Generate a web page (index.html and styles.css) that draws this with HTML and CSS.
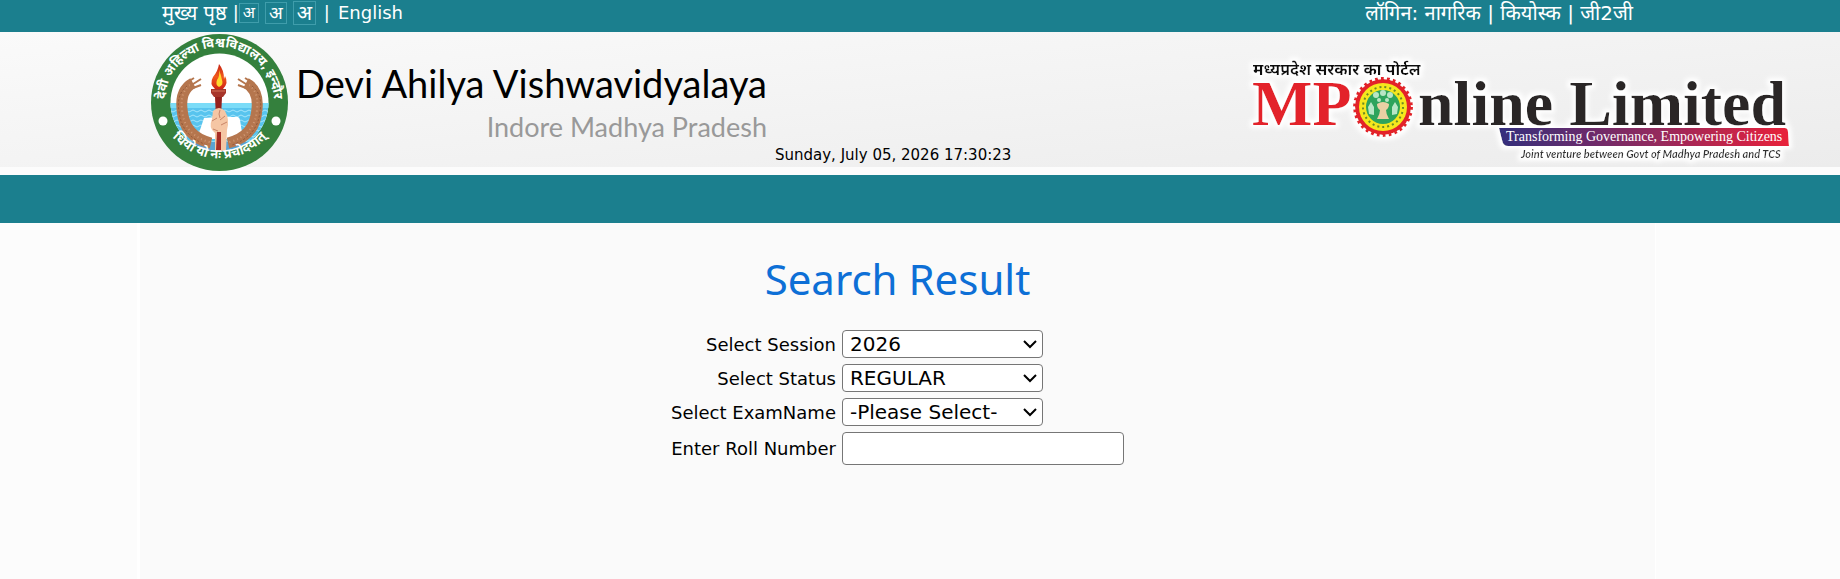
FILE: index.html
```html
<!DOCTYPE html>
<html lang="hi">
<head>
<meta charset="utf-8">
<title>Search Result</title>
<link rel="stylesheet" href="styles.css">
</head>
<body>
<div class="topbar">
  <nav class="topbar-left">
    <a href="#">मुख्य पृष्ठ</a>
    <span class="bar">|</span>
    <button type="button" class="size size-s">अ</button>
    <button type="button" class="size size-m">अ</button>
    <button type="button" class="size size-l">अ</button>
    <span class="sep">|</span>
    <a href="#" lang="en" class="lang">English</a>
  </nav>
  <nav class="topbar-right">लॉगिन: <a href="#">नागरिक</a> | <a href="#">कियोस्क</a> | <a href="#">जी2जी</a></nav>
</div>

<header class="header">
  <svg class="emblem" viewBox="0 0 137 137" role="img" aria-label="Devi Ahilya Vishwavidyalaya emblem">
    <defs>
      <path id="arc-top" d="M14.5 75 A54.5 54.5 0 1 1 122.5 75"/>
      <path id="arc-bottom" d="M17 97 A62 62 0 0 0 120 97"/>
      <clipPath id="disc"><circle cx="68.500" cy="68.500" r="49"/></clipPath>
      <pattern id="waves" width="8" height="5" patternUnits="userSpaceOnUse">
        <rect width="8" height="5" fill="#58c4ee"/>
        <path d="M0 2 Q2 0 4 2 T8 2" fill="none" stroke="#a5e5fb" stroke-width="1"/>
      </pattern>
      <linearGradient id="flame" x1="0" y1="0" x2="0" y2="1"><stop offset="0" stop-color="#c42114"/><stop offset=".5" stop-color="#f1591c"/><stop offset="1" stop-color="#cf2416"/></linearGradient>
    </defs>
    <circle cx="68.500" cy="68.500" r="68.500" fill="#34803d"/>
    <circle cx="68.500" cy="68.500" r="49" fill="#fff"/>
    <g clip-path="url(#disc)">
      <rect x="18" y="69" width="102" height="50" fill="url(#waves)"/>
      <rect x="18" y="69" width="102" height="5" fill="#7bdcf8"/>
      <path d="M53 84 L67 83 L84 83 Q88 82 89 86 L92 105 L46 105 Z" fill="#fff"/>
      <path d="M20 108 H118 V119 H20Z" fill="#5aa2d3"/>
      <g fill="none" stroke="#b5764e" stroke-width="11">
        <path d="M42 49 Q29 56 31 75 Q33 103 60 109"/>
        <path d="M95 49 Q108 56 106 75 Q104 103 77 109"/>
      </g>
      <g fill="none" stroke="#cf9874" stroke-width="2" stroke-dasharray="1 3">
        <path d="M39 51 Q29 58 31 75 Q33 102 59 108"/>
        <path d="M98 51 Q108 58 106 75 Q104 102 78 108"/>
      </g>
      <g fill="none" stroke="#8f5638" stroke-width="1" stroke-dasharray="2 2">
        <path d="M36 52 Q25 61 28 77 Q30 102 56 111"/>
        <path d="M101 52 Q112 61 109 77 Q107 102 81 111"/>
      </g>
      <g fill="none" stroke="#b5764e" stroke-width="2">
        <path d="M35 49 L43 44 M39 52 L50 45 M42 54 L50 51 M102 49 L94 44 M98 52 L87 45 M95 54 L87 51"/>
      </g>
    </g>
    <path d="M68 30 Q67 37 62 43 Q58 50 64 55 L72 55 Q78 49 74 42 L73 45 Q73 36 68 30Z" fill="url(#flame)"/>
    <path d="M68 36 Q69 42 66 46 Q64 51 68 53 Q73 51 71 46 Q70 41 68 36Z" fill="#ffd92e"/>
    <path d="M60 55 H75 V59 L72 63 H63 L60 59Z" fill="#a7352a"/>
    <path d="M61 57 H74" stroke="#d47558" stroke-width="1"/>
    <path d="M64 63 H71 L70 84 H65Z" fill="#94211d"/>
    <path d="M62 77 Q68 71 74 77 Q79 86 76 96 L75 117 H64 L64 99 Q57 94 61 85Z" fill="#f5c6a4"/>
    <path d="M69 76 Q67 80 69 84 M74 82 L69 86 M76 88 L70 91 M61 87 L66 84 M62 95 L67 97" stroke="#c88468" stroke-width="1" fill="none"/>
    <path d="M66 98 H70 V116 H65Z" fill="#a72d26"/>
    <circle cx="12" cy="87" r="4.500" fill="#fff"/>
    <circle cx="125" cy="87" r="4.500" fill="#fff"/>
    <text class="emblem-text"><textPath href="#arc-top" startOffset="50%">देवी अहिल्या विश्वविद्यालय, इन्दौर</textPath></text>
    <text class="emblem-text"><textPath href="#arc-bottom" startOffset="50%">धियो यो नः प्रचोदयात्</textPath></text>
  </svg>
  <div class="titles" lang="en">
    <div class="name">Devi Ahilya Vishwavidyalaya</div>
    <div class="place">Indore Madhya Pradesh</div>
  </div>
  <div class="clock" lang="en">Sunday, July 05, 2026 17:30:23</div>
  <svg class="portal" viewBox="0 0 550 106" role="img" aria-label="MPOnline Limited">
    <defs>
      <linearGradient id="ribbon"><stop offset="0" stop-color="#332f7c"/><stop offset=".5" stop-color="#8c2a60"/><stop offset="1" stop-color="#e9213a"/></linearGradient>
      <filter id="halo" x="-5%" y="-15%" width="110%" height="130%">
        <feMorphology in="SourceAlpha" operator="dilate" radius="3"/>
        <feGaussianBlur stdDeviation="2" result="a"/>
        <feFlood flood-color="#fff"/>
        <feComposite in2="a" operator="in"/>
        <feMerge><feMergeNode/><feMergeNode in="SourceGraphic"/></feMerge>
      </filter>
    </defs>
    <g filter="url(#halo)">
      <text x="3" y="15" class="portal-hindi">मध्यप्रदेश सरकार का पोर्टल</text>
      <text x="2" y="65" class="portal-red">MP</text>
      <text x="168" y="65" class="portal-dark">nline Limited</text>
      <circle cx="133" cy="47" r="28" fill="#e32129"/>
      <circle cx="133" cy="47" r="28.500" fill="none" stroke="#e32129" stroke-width="3" stroke-dasharray="3 3"/>
      <path d="M252 68 H535 Q538 68 538 72 L539 86 H258 Q253 86 252 80 L249 68Z" fill="url(#ribbon)"/>
      <text x="271" y="98" class="portal-venture">Joint venture between Govt of Madhya Pradesh and TCS</text>
    </g>
    <circle cx="133" cy="47" r="24" fill="#f5e71d"/>
    <circle cx="133" cy="47" r="20" fill="none" stroke="#6c8a24" stroke-width="2" stroke-dasharray="2 3"/>
    <circle cx="133" cy="47" r="17" fill="#2ea45c"/>
    <g fill="#b9e6c5">
      <circle cx="126" cy="35" r="3"/><circle cx="133" cy="33" r="3"/><circle cx="140" cy="35" r="3"/><circle cx="129" cy="40" r="2"/><circle cx="137" cy="40" r="2"/>
      <path d="M118 47 L121 42 L124 47 L124 55 L119 54Z M142 47 L145 42 L148 47 L147 54 L142 55Z"/>
    </g>
    <path d="M127 44 Q133 40 139 44 Q139 48 136 50 Q136 54 139 59 H127 Q130 54 130 50 Q127 48 127 44Z" fill="#ead0a4"/>
    <text x="256" y="81" class="portal-tag">Transforming Governance, Empowering Citizens</text>
  </svg>
</header>
<div class="menu"></div>

<main class="content" lang="en">
  <h1>Search Result</h1>
  <form class="form">
    <label for="session">Select Session</label>
    <div class="field"><select id="session"><option>2026</option></select></div>
    <label for="status">Select Status</label>
    <div class="field"><select id="status"><option>REGULAR</option></select></div>
    <label for="exam">Select ExamName</label>
    <div class="field"><select id="exam"><option>-Please Select-</option></select></div>
    <label for="roll">Enter Roll Number</label>
    <div class="field"><input id="roll" type="text"></div>
  </form>
</main>
</body>
</html>
```
FILE: styles.css
```css
* { box-sizing: border-box; }

body {
  margin: 0;
  display: flex;
  flex-direction: column;
  min-height: 100vh;
  background: #fcfcfc;
  color: #000;
  font-family: "DejaVu Sans", "Noto Sans Devanagari", "Noto Sans", sans-serif;
}

.topbar {
  display: flex;
  justify-content: space-between;
  height: 32px;
  padding: 0 207px 0 162px;
  background: #1b7f8e;
  color: #fff;
  font-size: 20px;
  line-height: 26px;
  white-space: nowrap;
}

.topbar a { color: #fff; text-decoration: none; }
.topbar .lang { font-size: 18px; }

.topbar-left { display: flex; align-items: center; height: 26px; }
.bar { margin-left: 6px; }
.bar, .sep { font-size: 18px; }
.sep { margin: 0 8px; }

.size {
  margin-right: 6px;
  padding: 0;
  border: 1px solid #3f9dab;
  background: transparent;
  color: #fff;
  font-family: inherit;
}
.size-s { width: 20px; height: 20px; font-size: 16px; line-height: 18px; }
.size-m { width: 22px; height: 22px; font-size: 18px; line-height: 20px; }
.size-l { width: 23px; height: 24px; font-size: 20px; line-height: 22px; margin-right: 0; }

.header {
  display: flex;
  align-items: flex-start;
  height: 143px;
  padding: 2px 40px 0 151px;
  background: linear-gradient(175deg, #fafafa, #ececec) 0 0 / 100% 135px no-repeat;
}

.emblem { width: 137px; height: 137px; flex: none; }
.emblem-text {
  fill: #fff;
  font: bold 13px "Noto Sans Devanagari", "Noto Sans", sans-serif;
  text-anchor: middle;
}

.titles {
  padding-top: 24px;
  margin-left: 8px;
  text-align: right;
  font-family: Lato, sans-serif;
  white-space: nowrap;
}
.name { font-size: 38px; line-height: 50px; }
.place { color: #999; font-size: 27px; line-height: 38px; }

.clock { margin: 111px auto 0 8px; font-size: 15px; line-height: 20px; white-space: nowrap; }

.portal { width: 550px; height: 106px; margin-top: 26px; flex: none; overflow: visible; }
.portal-hindi { font: bold 16px "Noto Sans Devanagari", "Noto Sans", sans-serif; fill: #111; }
.portal-red, .portal-dark { font: bold 64px "Liberation Serif", serif; }
.portal-red { fill: #e32129; }
.portal-dark { fill: #2b2828; }
.portal-tag { font: 14px "Liberation Serif", serif; fill: #fff; }
.portal-venture { font: italic bold 11px Lato, sans-serif; fill: #333; }

.menu { height: 48px; background: #1b7f8e; }

.content {
  flex: 1;
  margin: 0 184px 0 137px;
  border: solid #fff;
  border-width: 0 1px 0 3px;
  padding: 26px 0 40px;
  background: #fafafa;
}

h1 {
  margin: 0 0 21px;
  color: #0d6fd6;
  font: 42px/60px "Noto Sans", sans-serif;
  text-align: center;
}

.form {
  display: grid;
  grid-template-columns: max-content max-content;
  justify-content: center;
  align-items: center;
  gap: 6px;
  font-size: 18px;
}
.form label { text-align: right; }
.field { display: flex; }

select, input {
  border: 1px solid #767676;
  border-radius: 4px;
  background: #fff;
  color: #000;
  font: 20px "DejaVu Sans", sans-serif;
}
select {
  width: 201px;
  height: 28px;
  padding: 0 24px 0 7px;
  appearance: none;
  background: #fff url("data:image/svg+xml,%3Csvg xmlns='http://www.w3.org/2000/svg' width='14' height='9'%3E%3Cpath d='M1 1L7 7L13 1' fill='none' stroke='%23000' stroke-width='2'/%3E%3C/svg%3E") right 5px center no-repeat;
}
input { width: 282px; height: 33px; padding: 2px 6px; }
```
